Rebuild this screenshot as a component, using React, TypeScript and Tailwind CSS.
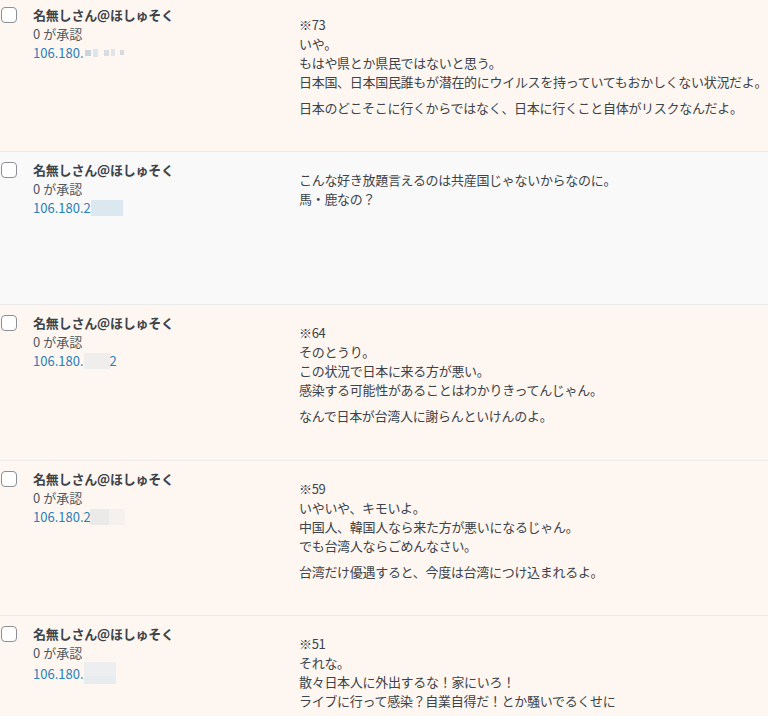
import React from "react";

type Row = {
  bg: string;
  h: string;
  ip: React.ReactNode;
  paras: string[][];
};

const FONT = {
  fontFamily: '"Noto Sans CJK JP", "Noto Sans", "Liberation Sans", sans-serif',
};

const rows: Row[] = [
  {
    bg: "bg-[#fef7f1]",
    h: "h-[154px] -mt-[3px]",
    ip: (
      <span className="inline-flex items-center">
        106.180.
        <span className="inline-flex items-center gap-[2px] ml-[1px]">
          <span className="inline-block w-[6px] h-[6px] bg-[#c9d4dc]" />
          <span className="inline-block w-[5px] h-[8px] bg-[#dde4ea]" />
          <span className="inline-block w-[5px] h-[6px] bg-[#d6dde3] ml-[4px]" />
          <span className="inline-block w-[4px] h-[7px] bg-[#dfe5ea]" />
          <span className="inline-block w-[4px] h-[5px] bg-[#d3dbe1] ml-[3px]" />
        </span>
      </span>
    ),
    paras: [
      [
        "※73",
        "いや。",
        "もはや県とか県民ではないと思う。",
        "日本国、日本国民誰もが潜在的にウイルスを持っていてもおかしくない状況だよ。",
      ],
      ["日本のどこそこに行くからではなく、日本に行くこと自体がリスクなんだよ。"],
    ],
  },
  {
    bg: "bg-[#f9f9f9]",
    h: "h-[152px]",
    ip: (
      <span className="inline-flex items-center">
        106.180.2
        <span className="inline-block w-[32px] h-[16px] bg-[#dce8ef]" />
      </span>
    ),
    paras: [["こんな好き放題言えるのは共産国じゃないからなのに。", "馬・鹿なの？"]],
  },
  {
    bg: "bg-[#fef7f1]",
    h: "h-[155px]",
    ip: (
      <span className="inline-flex items-center">
        106.180.
        <span className="inline-block w-[26px] h-[16px] bg-[#efeeed]" />
        2
      </span>
    ),
    paras: [
      [
        "※64",
        "そのとうり。",
        "この状況で日本に来る方が悪い。",
        "感染する可能性があることはわかりきってんじゃん。",
      ],
      ["なんで日本が台湾人に謝らんといけんのよ。"],
    ],
  },
  {
    bg: "bg-[#fef7f1]",
    h: "h-[154px]",
    ip: (
      <span className="inline-flex items-center">
        106.180.2
        <span className="inline-block w-[4px] h-[16px] bg-[#ebeae9] -ml-[1px]" />
        <span className="inline-block w-[15px] h-[16px] bg-[#ebeae9]" />
        <span className="inline-block w-[16px] h-[16px] bg-[#f4f1ee]" />
      </span>
    ),
    paras: [
      [
        "※59",
        "いやいや、キモいよ。",
        "中国人、韓国人なら来た方が悪いになるじゃん。",
        "でも台湾人ならごめんなさい。",
      ],
      ["台湾だけ優遇すると、今度は台湾につけ込まれるよ。"],
    ],
  },
  {
    bg: "bg-[#fef7f1]",
    h: "h-[160px]",
    ip: (
      <span className="inline-flex items-center">
        106.180.
        <span className="inline-flex flex-col">
          <span className="inline-block w-[32px] h-[14px] bg-[#eceeef]" />
          <span className="inline-block w-[32px] h-[8px] bg-[#e9ecef]" />
        </span>
      </span>
    ),
    paras: [
      [
        "※51",
        "それな。",
        "散々日本人に外出するな！家にいろ！",
        "ライブに行って感染？自業自得だ！とか騒いでるくせに",
      ],
    ],
  },
];

function Checkbox() {
  return (
    <span className="block w-[16px] h-[16px] mt-[10px] ml-[1px] rounded-[4px] border border-[#8c8f94] bg-white" />
  );
}

export default function App() {
  return (
    <div
      className="w-[768px] h-[716px] overflow-hidden bg-[#fef7f1] text-[13px] leading-[19px] text-[#3c434a]"
      style={FONT}
    >
      {rows.map((r, i) => (
        <div
          key={i}
          className={`flex ${r.bg} ${r.h} border-b border-[#ebebeb] box-content`}
        >
          <div className="w-[33px] shrink-0">
            <Checkbox />
          </div>
          <div className="w-[266px] shrink-0 pt-[8px]">
            <div className="font-bold text-[#3c434a] tracking-[-0.2px]">名無しさん@ほしゅそく</div>
            <div className="text-[#50575e]">0 が承認</div>
            <div className="text-[#2a7fba]">{r.ip}</div>
          </div>
          <div className="flex-1 pt-[8px] tracking-[-0.3px] whitespace-nowrap">
            {r.paras.map((p, j) => (
              <p key={j} className={j === 0 ? "mt-[10px]" : "mt-[7px]"}>
                {p.map((line, k) => (
                  <React.Fragment key={k}>
                    {line}
                    {k < p.length - 1 && <br />}
                  </React.Fragment>
                ))}
              </p>
            ))}
          </div>
        </div>
      ))}
    </div>
  );
}
